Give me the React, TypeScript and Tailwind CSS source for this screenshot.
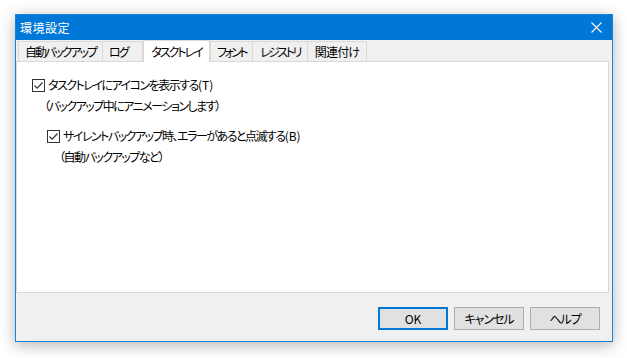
import React from "react";

const font = "font-['Meiryo_UI','Noto_Sans_CJK_JP',sans-serif] [font-feature-settings:'palt']";

function Check({ checked }: { checked: boolean }) {
  return (
    <span className="w-[13px] h-[13px] border border-[#333] bg-white flex items-center justify-center shrink-0">
      {checked && (
        <svg width="11" height="11" viewBox="0 0 11 11">
          <path d="M1.5 5.5 L4.2 8.2 L9.5 2.5" fill="none" stroke="#333" strokeWidth="1.2" />
        </svg>
      )}
    </span>
  );
}

export default function App() {
  return (
    <div className={`w-[627px] h-[358px] bg-white pl-[15px] pt-[14px] ${font} text-[12px] text-black`}>
      <div className="w-[598px] h-[328px] border border-[#1883d7] bg-[#f0f0f0] flex flex-col shadow-[0_3px_14px_rgba(0,0,0,0.3)]">
        <div className="h-[25px] bg-[#0078d7] flex items-center justify-between pl-[4px] pr-[10px] text-white">
          <span className="text-[12px] leading-none tracking-[0.5px]">環境設定</span>
          <svg width="11" height="11" viewBox="0 0 11 11">
            <path d="M0.5 0.5 L10.5 10.5 M10.5 0.5 L0.5 10.5" stroke="white" strokeWidth="1.1" />
          </svg>
        </div>
        <div className="flex items-end h-[21px] pl-[2px] tracking-[-2px]">
          <div className="w-[85px] h-[20px] bg-[#f0f0f0] border border-b-0 border-[#d9d9d9] flex items-center justify-center">自動バックアップ</div>
          <div className="w-[41px] h-[20px] -ml-[1px] bg-[#f0f0f0] border border-b-0 border-[#d9d9d9] flex items-center pl-[6px]">ログ</div>
          <div className="w-[67px] h-[22px] -mb-[1px] bg-white border border-b-0 border-[#d9d9d9] flex items-center justify-center relative z-10">タスクトレイ</div>
          <div className="w-[43px] h-[20px] bg-[#f0f0f0] border border-b-0 border-[#d9d9d9] flex items-center justify-center tracking-[-2.5px]">フォント</div>
          <div className="w-[56px] h-[20px] -ml-[1px] bg-[#f0f0f0] border border-b-0 border-[#d9d9d9] flex items-center justify-center tracking-[-2.5px]">レジストリ</div>
          <div className="w-[60px] h-[20px] -ml-[1px] bg-[#f0f0f0] border border-b-0 border-[#d9d9d9] flex items-center justify-center tracking-[-0.8px]">関連付け</div>
        </div>
        <div className="mr-[3px] h-[232px] bg-white border border-[#d9d9d9] flex flex-col pl-[15px] pt-[16px] tracking-[-1.5px]">
          <div className="flex items-center gap-[3px] h-[14px]">
            <Check checked />
            <span className="leading-none">
              タスクトレイにアイコンを表示する<span className="tracking-[0px]">(T)</span>
            </span>
          </div>
          <div className="pl-[12px] mt-[8px] leading-none">（バックアップ中にアニメーションします）</div>
          <div className="flex items-center gap-[3px] h-[14px] mt-[17px] pl-[15px]">
            <Check checked />
            <span className="leading-none">
              サイレントバックアップ時、エラーがあると点滅する<span className="tracking-[0px]">(B)</span>
            </span>
          </div>
          <div className="pl-[27px] mt-[8px] leading-none">（自動バックアップなど）</div>
        </div>
        <div className="flex justify-end gap-[6px] pr-[12px] mt-[14px] tracking-[-1px]">
          <button className="w-[70px] h-[23px] border-2 border-[#0078d7] bg-[#e1e1e1] flex items-center justify-center tracking-[0px]">OK</button>
          <button className="w-[70px] h-[23px] border border-[#adadad] bg-[#e1e1e1] flex items-center justify-center">キャンセル</button>
          <button className="w-[70px] h-[23px] border border-[#adadad] bg-[#e1e1e1] flex items-center justify-center">ヘルプ</button>
        </div>
      </div>
    </div>
  );
}
